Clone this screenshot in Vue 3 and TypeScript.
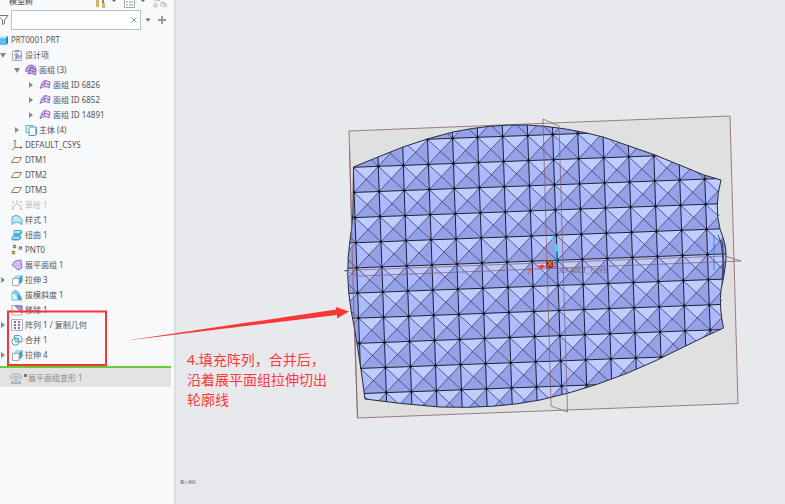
<script setup lang="ts">
import { ref } from 'vue'

interface TreeRow {
  text: string
  icon: string
  level: number
  arrow?: 'open' | 'closed'
  dim?: boolean
}

const query = ref('')

const rows: TreeRow[] = [
  { text: 'PRT0001.PRT', icon: 'part', level: 0 },
  { text: '设计项', icon: 'design', level: 1, arrow: 'open' },
  { text: '面组 (3)', icon: 'quilts', level: 2, arrow: 'open' },
  { text: '面组 ID 6826', icon: 'quilt', level: 3, arrow: 'closed' },
  { text: '面组 ID 6852', icon: 'quilt', level: 3, arrow: 'closed' },
  { text: '面组 ID 14891', icon: 'quilt', level: 3, arrow: 'closed' },
  { text: '主体 (4)', icon: 'body', level: 2, arrow: 'closed' },
  { text: 'DEFAULT_CSYS', icon: 'csys', level: 1 },
  { text: 'DTM1', icon: 'plane', level: 1 },
  { text: 'DTM2', icon: 'plane', level: 1 },
  { text: 'DTM3', icon: 'plane', level: 1 },
  { text: '草绘 1', icon: 'sketch', level: 1, dim: true },
  { text: '样式 1', icon: 'style', level: 1 },
  { text: '扭曲 1', icon: 'warp', level: 1 },
  { text: 'PNT0', icon: 'point', level: 1 },
  { text: '展平面组 1', icon: 'flat', level: 1 },
  { text: '拉伸 3', icon: 'extrude', level: 1, arrow: 'closed' },
  { text: '拔模斜度 1', icon: 'draft', level: 1 },
  { text: '移除 1', icon: 'remove', level: 1 },
  { text: '阵列 1 / 复制几何', icon: 'pattern', level: 1, arrow: 'closed' },
  { text: '合并 1', icon: 'merge', level: 1 },
  { text: '拉伸 4', icon: 'extrude', level: 1, arrow: 'closed' },
]

const outline =
  'M353.5 167 L378 157 L403 147 Q428 138 453 132 Q490 124 528 125 Q566 127 603 137 Q654 153 704 175 L721 180 Q714 206 720 229 Q727 246 726 259 Q725 272 721 290 Q719 308 723.5 328 L704 337 L655 361 Q600 387 540 400 Q495 409 440 407 Q400 404 365 399 Q358 345 351 310 Q345 275 350 240 Q353 220 353 205 Z'

// Lattice of pyramids: column c, row r mapped onto the skewed drawing plane
const point = (c: number, r: number): string =>
  `${(378.3 + c * 25.05 + r * 0.89).toFixed(1)} ${(166.3 - c * 0.95 + r * 25.15).toFixed(1)}`

const cells: [number, number][] = []
for (let r = -3; r < 11; r++) for (let c = -2; c < 15; c++) cells.push([c, r])

const join = (draw: (c: number, r: number) => string): string =>
  cells.map(([c, r]) => draw(c, r)).join('')

const topFaces = join((c, r) => `M${point(c, r)}L${point(c + 1, r)}L${point(c + 0.5, r + 0.5)}z`)
const leftFaces = join((c, r) => `M${point(c, r)}L${point(c, r + 1)}L${point(c + 0.5, r + 0.5)}z`)
const ridges = join((c, r) => `M${point(c, r)}L${point(c + 1, r + 1)}M${point(c + 1, r)}L${point(c, r + 1)}`)
const edges = join((c, r) => `M${point(c + 1, r)}L${point(c, r)}L${point(c, r + 1)}`)
const nodes = join((c, r) => `M${point(c, r)}h.01`)
</script>

<template>
  <div class="app">
    <svg class="defs" aria-hidden="true">
      <symbol id="i-part" viewBox="0 0 12 12"><path d="M0 4 2 2h8v7l-2 2H0z" fill="#5cc1ea" /><path d="M0 4 2 2h8L8 4z" fill="#b9ecff" /><path d="M8 4l2-2v7l-2 2z" fill="#2386b5" /></symbol>
      <symbol id="i-design" viewBox="0 0 12 12"><path d="M1.500 2h9v9.500h-9z" fill="#f4f6f8" stroke="#aaa" /><path d="M4 3V1h4v2z" fill="#999" /><path d="M3 5l3-1 2 2-3 2z" fill="#6cb6dd" /><path d="M4 10c0-3 2-4 6-4 0 3-2 5-6 4z" fill="#9b7cc2" /><path d="M6 10l3-4" stroke="#eee" /></symbol>
      <symbol id="i-quilt" viewBox="0 0 12 12"><path d="M1 9.500 3 4q2-4 8-1L10 9Q6 6 1 9.500zM6 1.500 5 7.500M2.500 6q4-3 8.500 0" fill="#e8d8fa" stroke="#9068c0" /></symbol>
      <symbol id="i-quilts" viewBox="0 0 12 12"><path d="M.7 7.500Q1 1 6 1q3 0 5 3l-1 4Q5 5 .7 7.500zM3 10Q3 4 7 4t4 2l-.5 5Q7 8 3 10zM6 1 5 9M8 2v7M1 5q5-3 10 1" fill="#dfc9f5" stroke="#9068c0" /></symbol>
      <symbol id="i-body" viewBox="0 0 12 12"><path d="M1 1.500h7v7H1z" fill="#e7f7ff" stroke="#6aadc9" /><path d="M4 4.500 5 3h6.500v7l-1.500 1.500H4z" fill="#fff" stroke="#3f9cc5" /><path d="M10 4.500 11.500 3v7L10 11.500z" fill="#63bce1" /></symbol>
      <symbol id="i-csys" viewBox="0 0 12 12"><path d="M4 1v7.500h7M4 8.500 1 11M3 2.500 4 1l1 1.500M9.500 7 11 8.500 9.500 10" fill="none" stroke="#9c7a4d" /></symbol>
      <symbol id="i-plane" viewBox="0 0 12 12"><path d="M3.500 3.500h7l-3 5h-7z" fill="#fffef7" stroke="#99794d" /></symbol>
      <symbol id="i-sketch" viewBox="0 0 12 12"><path d="M2 11C3 3 9 3 10 11" fill="none" stroke="#b3b3ab" /><path d="M1 2h2v2H1zM5 1.500h2v2H5zM9 2h2v2H9zM1 5.500h1v2H1zM10 5.500h1v2h-1zM1 9h1v2H1zM10 9h1v2h-1z" fill="#d6d2c4" /></symbol>
      <symbol id="i-style" viewBox="0 0 12 12"><path d="M1 10.500V3q4-3 7.500-.5l2.500 3v5Q5 6 1 10.500z" fill="#b5eaff" stroke="#62a5c0" /></symbol>
      <symbol id="i-warp" viewBox="0 0 12 12"><path d="M3 1.500h6.500l1.500 1-1 3L7.500 7h2l.5 2-2 2H1V8l3-2.500H3z" fill="#4db4df" stroke="#3d98bf" stroke-width=".8" /><path d="M3.500 2h6L8.500 4H3zM1.500 8h6.500l1-.5-1 2H1.500z" fill="#b6eaff" /></symbol>
      <symbol id="i-point" viewBox="0 0 12 12"><path d="M2 1l3 3M5 1 2 4M8 2.500l3 3M11 2.500l-3 3M1 7l3 3M4 7l-3 3" stroke="#8d6b3a" stroke-width="1.200" /></symbol>
      <symbol id="i-flat" viewBox="0 0 12 12"><path d="M1 6 4 2l6-1 1 8-4 2z" fill="#d2bcf2" stroke="#9474bd" /></symbol>
      <symbol id="i-extrude" viewBox="0 0 12 12"><path d="M2 4 5 1h6.500L8 4z" fill="#a1e0f8" /><path d="M8 4l3.500-3v6.500L8 11z" fill="#3f9fca" /><path d="M1.500 4.500H8v7H1.500z" fill="#fff" stroke="#a3abb0" /></symbol>
      <symbol id="i-draft" viewBox="0 0 12 12"><path d="M1 11V4l3-3 3 2 4 8z" fill="#7ecdeb" stroke="#5aaac8" stroke-width=".8" /><path d="M1.500 4.500l3 1 2 5h-5z" fill="#e0f7ff" /><path d="M7 3v7.500h4z" fill="#3f9fca" /></symbol>
      <symbol id="i-remove" viewBox="0 0 12 12"><path d="M1 1.500h10v9.500H1z" fill="#fff" stroke="#b0adb4" /><path d="M4 2h7v7z" fill="#b49bd3" stroke="#8b69b3" /></symbol>
      <symbol id="i-pattern" viewBox="0 0 12 12"><path d="M.5.5h11v11H.5z" fill="#fff" stroke="#b5b1b9" /><path d="M3 2h2v2H3zM7 2h2v2H7zM3 5h2v2H3zM7 5h2v2H7zM3 8h2v2H3zM7 8h2v2H7z" fill="#8a66b5" /></symbol>
      <symbol id="i-merge" viewBox="0 0 12 12"><path d="M3.500 4V1.500h5l2.500 2V8H8" fill="#e7f7ff" stroke="#5da3bd" /><circle cx="4.500" cy="7.500" r="3.700" fill="#fff" stroke="#5b9ab1" /><path d="M4 4.500h3.500V8H5q-2-1-1-3.500z" fill="#a8def3" stroke="#5da3bd" /></symbol>
      <symbol id="i-deform" viewBox="0 0 12 12"><path d="M.5 5q0-3.500 5.500-3.500T11.500 5v1.500h-3V5h-5v1.500h-3z" fill="#d6d6d6" stroke="#aaa" stroke-width=".7" /><path d="M6 4v5M4 7.500l2 1.500 2-1.500M1 9h2M9 9h2" fill="none" stroke="#aaa" /><path d="M1 11h10" stroke="#65a7bd" stroke-width="1.300" /></symbol>
    </svg>

    <aside class="sidebar">
      <header class="head">
        <h1>模型树</h1>
        <div class="tools">
          <button aria-label="设置"><svg width="26" height="8" viewBox="0 0 26 8"><path d="M1 0h3v7H1z" fill="#dfaf69" /><path d="M7 0h2v4H7z" fill="#888" /><path d="M7 3h3v5H7z" fill="#deb16b" /><path d="M17 0h4l-2 2z" fill="#666" /></svg></button>
          <button aria-label="显示"><svg width="26" height="8" viewBox="0 0 26 8"><path d="M.5-1h10v8.500H.5z" fill="#fff" stroke="#a5a9ab" /><path d="M2 2h2M5 2h4M2 5h2M5 5h4" stroke="#8b98a0" /><path d="M17 0h4l-2 2z" fill="#666" /></svg></button>
          <button aria-label="层"><svg width="15" height="8" viewBox="0 0 15 8"><path d="M1 4h3v3H1zM2 2V0M4 .5h3M7 4.500q3-4 6.500 0Q10 8 7 4.500zM8 1l6 6" fill="none" stroke="#b5b5b5" /></svg></button>
        </div>
      </header>
      <div class="search">
        <svg class="funnel" width="9" height="10" viewBox="0 0 9 10"><path d="M-2 .5h10L4.500 5v3.500l-2 1V5z" fill="#fff" stroke="#777" /></svg>
        <div class="field">
          <input v-model="query" aria-label="搜索模型树" />
          <button aria-label="清除" @click="query = ''"><svg width="6" height="6" viewBox="0 0 6 6"><path d="M.5.5l5 5M5.500.5l-5 5" stroke="#999" /></svg></button>
        </div>
        <button aria-label="搜索选项"><svg width="6" height="4" viewBox="0 0 6 4"><path d="M.5.5h5L3 3.500z" fill="#666" /></svg></button>
        <button aria-label="添加"><svg width="8" height="8" viewBox="0 0 8 8"><path d="M4 0v8M0 4h8" stroke="#999" stroke-width="2" /></svg></button>
      </div>
      <ul class="tree">
        <li v-for="(row, i) in rows" :key="i" :class="['row', 'level-' + row.level, { dim: row.dim }]">
          <span class="twist">
            <svg v-if="row.arrow" width="6" height="6" viewBox="0 0 6 6"><path :d="row.arrow === 'open' ? 'M0 1h6L3 6z' : 'M1 0v6l4-3z'" fill="#888" /></svg>
          </span>
          <svg class="icon"><use :href="'#i-' + row.icon" /></svg>
          <span>{{ row.text }}</span>
        </li>
      </ul>
      <div class="footer-row">
        <svg class="icon"><use href="#i-deform" /></svg>
        <i class="mark"></i>
        <span>展平面组变形 1</span>
      </div>
    </aside>

    <main class="canvas">
      <svg class="model" width="410" height="320" viewBox="340 106 410 320" role="img" aria-label="三维模型">
        <defs>
          <clipPath id="trim"><path :d="outline" /></clipPath>
        </defs>
        <path d="M349 131 730 116l8 287.500L357.500 418z" fill="#e0e0e1" stroke="#9a7c80" />
        <g clip-path="url(#trim)" fill="none">
          <path :d="outline" fill="#96a1e8" />
          <path :d="topFaces" fill="#c0ceff" />
          <path :d="leftFaces" fill="#acbaff" />
          <path :d="ridges" stroke="#3a4266" stroke-width=".8" />
          <path :d="edges" stroke="#1c2036" />
          <path :d="nodes" stroke="#101322" stroke-width="2.500" stroke-linecap="round" />
        </g>
        <path :d="outline" fill="none" stroke="#262a38" />
        <path d="M718 235q7 12 4 50M722 240q3 20 1 38" fill="none" stroke="#30406f" />
        <path d="M714 235v35M718 214l1 2M720 298l2 3" stroke="#2686f4" />
        <g fill="none" stroke="#865e6c" stroke-opacity=".75">
          <path d="M543 119l16 7 8.500 286L551 406z" />
          <path d="M344 270.500 725 256l16 5-381 15z" />
          <path d="M349.500 150 354 320 357.500 418" />
        </g>
        <path d="M556.500 265v-20" stroke="#098c96" />
        <path d="M555.500 251l1-7 1 7zM551 236l1.500 2 1.500-2M552.500 238v3" fill="#22eaff" stroke="#22eaff" stroke-width=".8" />
        <path d="M537 266.500h20M538 266.500l5-1.500v3z" fill="#ff2e35" stroke="#ff2e35" />
        <path d="M528 268l3 3M531 268l-3 6" stroke="#e44d5c" />
        <path d="M546 260h7v8h-7z" fill="#8f3542" /><path d="M548 261l4 5M552 261l-5 6" stroke="#f0a020" /><path d="M547 259l2 1" stroke="#37d55b" />
        <text class="csys" x="557" y="273">DEFAULT_CSYS</text>
      </svg>
      <p class="note">4.填充阵列，合并后，<br />沿着展平面组拉伸切出<br />轮廓线</p>
      <p class="status">输入坐标</p>
    </main>

    <svg class="markup" width="360" height="70" viewBox="0 304 360 70" aria-hidden="true">
      <path d="M8 311.500h98V365H8z" fill="none" stroke="#f73336" stroke-width="2" />
      <path d="M123 341 336 309.500v-2.500l13 4.500-12 7v-3.500z" fill="#fc3635" />
    </svg>
  </div>
</template>

<style>
body { margin: 0; }
</style>

<style scoped>
.app { position: relative; display: flex; min-height: 100vh; overflow: hidden; background: #e8e9ed; color: #555; font: 8px/15px "Noto Sans", "Noto Sans CJK SC", sans-serif; }
.defs { position: absolute; width: 0; height: 0; }
button { display: flex; align-items: center; padding: 0; border: 0; background: none; }
.sidebar { flex: 0 0 176px; min-width: 0; box-sizing: border-box; border-right: 2px solid #d7e1e3; background: #f7f9fb; }
.head { display: flex; justify-content: space-between; height: 9px; }
h1 { margin: -7px 0 0 9px; font-size: 8px; font-weight: 500; }
.tools { display: flex; align-items: flex-start; gap: 3px; margin-right: 6px; }
.search { display: flex; align-items: center; height: 22px; }
.funnel { flex: none; margin-right: 2px; }
.field { display: flex; flex: 0 1 130px; min-width: 0; height: 20px; box-sizing: border-box; border: 1px solid #b3c7c9; background: #fff; padding-right: 3px; }
.field input { width: 0; min-width: 0; flex: 1; border: 0; padding: 0 3px; outline: 0; font: inherit; background: transparent; }
.search > button { margin-left: 4px; }
.search > button + button { margin-left: 7px; }
.tree { margin: 0; padding: 1px 0 0; list-style: none; }
.row { display: flex; align-items: center; height: 15px; white-space: nowrap; }
.twist { display: flex; width: 11px; }
.icon { flex: none; width: 12px; height: 12px; margin-right: 2px; }
.level-0 .twist { display: none; }
.level-0 .icon { margin: 0 1px 0 -2px; }
.level-2 { padding-left: 14px; }
.level-3 { padding-left: 28px; }
.dim { color: #bdbdbd; }
.footer-row { display: flex; align-items: center; height: 19px; margin: 4px 3px 0 0; padding-left: 10px; border-top: 2px solid #68ca3d; background: #e3e3e3; color: #888; }
.mark { width: 3px; height: 3px; margin: -5px 1px 0 0; background: #777; }
.canvas { position: relative; flex: 1; min-width: 0; }
.model { position: absolute; left: 164px; top: 106px; }
.csys { fill: #756078; font: 7px "Liberation Mono", monospace; }
.note { position: absolute; left: 11px; top: 350px; margin: 0; color: #f83b3b; font-size: 14px; line-height: 20px; white-space: nowrap; }
.status { position: absolute; left: 4px; top: 479px; margin: 0; font-size: 4px; line-height: 8px; color: #555; }
.markup { position: absolute; left: 0; top: 304px; pointer-events: none; }
</style>
